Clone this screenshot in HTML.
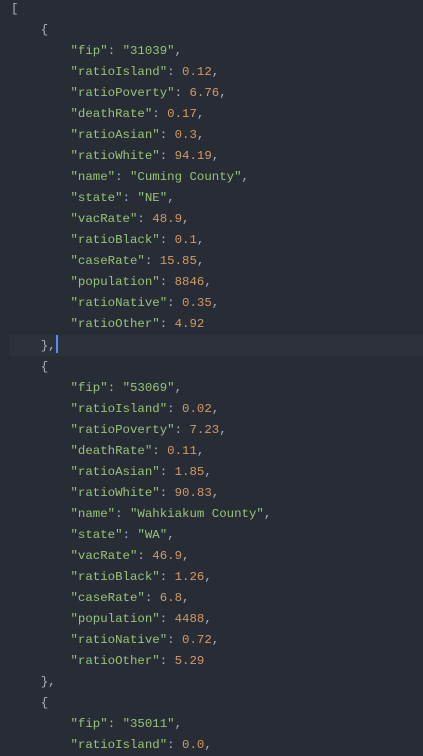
<!DOCTYPE html>
<html><head><style>
html,body{margin:0;padding:0;background:#282c34;width:423px;height:756px;overflow:hidden}
pre{margin:0;padding:0 0 0 11px;position:relative;z-index:1;top:-1px;font-family:"Liberation Mono",monospace;font-size:12.4px;line-height:21px;color:#abb2bf}
.k{color:#98c379}.n{color:#d19a66}
.hl{position:absolute;left:9px;right:0;top:335px;height:21px;background:#2c313a;z-index:0}
.cur{display:inline-block;width:2px;height:18px;background:#528bff;vertical-align:-4px}
</style></head><body>
<div class="hl"></div>
<pre>[
    {
        <span class="k">"fip"</span>: <span class="k">"31039"</span>,
        <span class="k">"ratioIsland"</span>: <span class="n">0.12</span>,
        <span class="k">"ratioPoverty"</span>: <span class="n">6.76</span>,
        <span class="k">"deathRate"</span>: <span class="n">0.17</span>,
        <span class="k">"ratioAsian"</span>: <span class="n">0.3</span>,
        <span class="k">"ratioWhite"</span>: <span class="n">94.19</span>,
        <span class="k">"name"</span>: <span class="k">"Cuming County"</span>,
        <span class="k">"state"</span>: <span class="k">"NE"</span>,
        <span class="k">"vacRate"</span>: <span class="n">48.9</span>,
        <span class="k">"ratioBlack"</span>: <span class="n">0.1</span>,
        <span class="k">"caseRate"</span>: <span class="n">15.85</span>,
        <span class="k">"population"</span>: <span class="n">8846</span>,
        <span class="k">"ratioNative"</span>: <span class="n">0.35</span>,
        <span class="k">"ratioOther"</span>: <span class="n">4.92</span>
    },<span class="cur"></span>
    {
        <span class="k">"fip"</span>: <span class="k">"53069"</span>,
        <span class="k">"ratioIsland"</span>: <span class="n">0.02</span>,
        <span class="k">"ratioPoverty"</span>: <span class="n">7.23</span>,
        <span class="k">"deathRate"</span>: <span class="n">0.11</span>,
        <span class="k">"ratioAsian"</span>: <span class="n">1.85</span>,
        <span class="k">"ratioWhite"</span>: <span class="n">90.83</span>,
        <span class="k">"name"</span>: <span class="k">"Wahkiakum County"</span>,
        <span class="k">"state"</span>: <span class="k">"WA"</span>,
        <span class="k">"vacRate"</span>: <span class="n">46.9</span>,
        <span class="k">"ratioBlack"</span>: <span class="n">1.26</span>,
        <span class="k">"caseRate"</span>: <span class="n">6.8</span>,
        <span class="k">"population"</span>: <span class="n">4488</span>,
        <span class="k">"ratioNative"</span>: <span class="n">0.72</span>,
        <span class="k">"ratioOther"</span>: <span class="n">5.29</span>
    },
    {
        <span class="k">"fip"</span>: <span class="k">"35011"</span>,
        <span class="k">"ratioIsland"</span>: <span class="n">0.0</span>,
</pre>
</body></html>
